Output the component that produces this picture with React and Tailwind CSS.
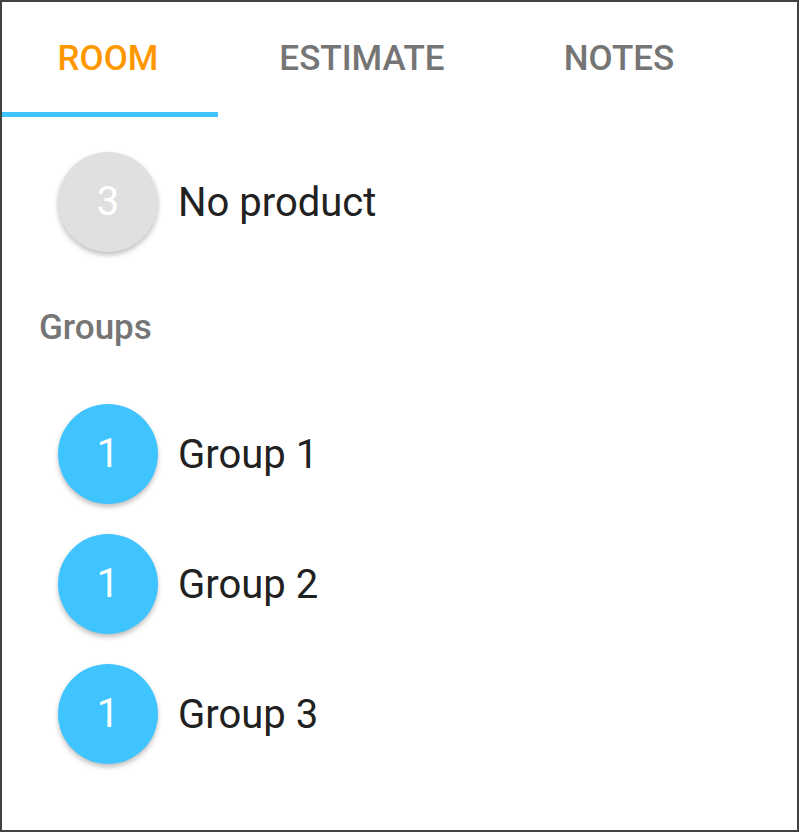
import React from "react";

function Row({ n, label, gray }) {
  return (
    <div className="flex items-center h-[100px]">
      <div
        className={
          "ml-[56px] w-[100px] h-[100px] rounded-full flex items-center justify-center text-white text-[40px] shadow-[0_3px_5px_rgba(0,0,0,0.25)] " +
          (gray ? "bg-[#e0e0e0]" : "bg-[#40c4ff]")
        }
      >
        {n}
      </div>
      <div className="ml-[20px] text-[40px] text-[#212121] pt-[2px]">{label}</div>
    </div>
  );
}

export default function App() {
  return (
    <div
      className="w-[799px] h-[832px] border-2 border-[#424242] bg-white overflow-hidden"
      style={{ fontFamily: "Roboto, 'Liberation Sans', sans-serif" }}
    >
      <div className="flex h-[115px]">
        <div className="w-[216px] flex flex-col">
          <div className="flex-1 flex items-center justify-center text-[35px] font-medium text-[#ff9800] pr-[4px] pt-[4px]">
            ROOM
          </div>
          <div className="h-[5px] bg-[#40c4ff]" />
        </div>
        <div className="w-[288px] flex items-center justify-center text-[35px] font-medium text-[#757575] pb-[1px]">
          ESTIMATE
        </div>
        <div className="w-[226px] flex items-center justify-center text-[35px] font-medium text-[#757575] pb-[1px]">
          NOTES
        </div>
      </div>
      <div className="pt-[35px]">
        <Row n="3" label="No product" gray />
      </div>
      <div className="mt-[56px] ml-[37px] text-[35px] font-medium text-[#757575] leading-[40px]">
        Groups
      </div>
      <div className="mt-[56px] flex flex-col gap-[30px]">
        <Row n="1" label="Group 1" />
        <Row n="1" label="Group 2" />
        <Row n="1" label="Group 3" />
      </div>
    </div>
  );
}
